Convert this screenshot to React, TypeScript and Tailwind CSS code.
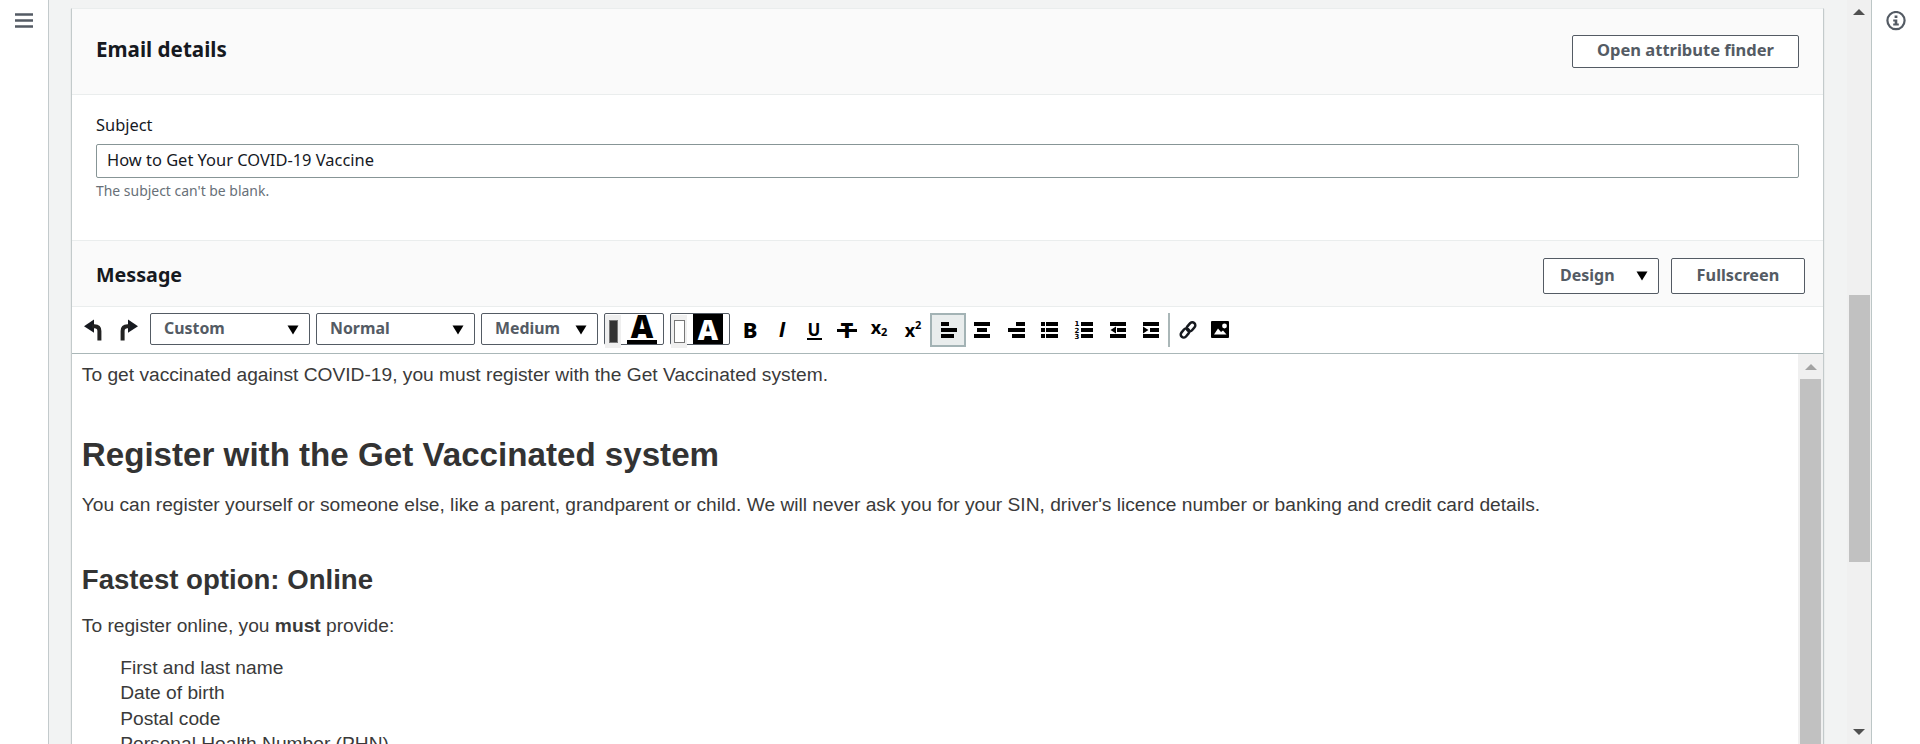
import React from "react";

const ui = "font-['Noto_Sans','Open_Sans',sans-serif]";

function Caret({ className = "" }: { className?: string }) {
  return (
    <svg width="12" height="10" viewBox="0 0 12 10" className={className}>
      <path d="M0.5 0.5H11.5L6 9.5Z" fill="#000" />
    </svg>
  );
}

function Select({ label, className }: { label: string; className: string }) {
  return (
    <button
      className={`-mt-0.5 flex h-8 shrink-0 items-center justify-between rounded-[2px] border border-[#545b64] bg-white pl-[13px] pr-[10px] text-left font-bold text-[#545b64] ${className}`}
    >
      <span className="-mt-0.5 leading-6">{label}</span>
      <Caret className="mt-0.5" />
    </button>
  );
}

function Bars({ rows }: { rows: [number, number, number][] }) {
  return (
    <svg width="18" height="18" viewBox="0 0 18 18" shapeRendering="crispEdges" className="block shrink-0">
      {rows.map(([x, y, w], i) => (
        <rect key={i} x={x} y={y} width={w} height="4" fill="#000" />
      ))}
    </svg>
  );
}

function Tool({ className = "", children }: { className?: string; children: React.ReactNode }) {
  return <button className={`flex h-[34px] shrink-0 items-center justify-center ${className}`}>{children}</button>;
}

function UndoArrow({ flip = false }: { flip?: boolean }) {
  return (
    <svg width="20" height="22" viewBox="0 0 20 22" className={flip ? "-scale-x-100" : ""}>
      <path d="M1 7.2L11 0.6V13.8Z" fill="#16191f" />
      <path d="M9 7.2H11.5Q16.4 7.2 16.4 12V21.5" fill="none" stroke="#222" strokeWidth="4" />
    </svg>
  );
}

function Toolbar() {
  return (
    <div className="flex h-[47px] shrink-0 items-center border-b border-[#aab7b8] pl-[11px] text-[15.9px] text-black">
      <Tool className="w-5"><UndoArrow /></Tool>
      <Tool className="ml-4 w-5"><UndoArrow flip /></Tool>
      <Select label="Custom" className="ml-[11px] w-[160px]" />
      <Select label="Normal" className="ml-1.5 w-[159px]" />
      <Select label="Medium" className="ml-1.5 w-[117px]" />
      <div className="-mt-0.5 ml-1.5 flex h-8 w-[60px] shrink-0 rounded-[2px] border border-[#545b64]">
        <div className="mt-px flex h-[33px] w-[16px] shrink-0 items-center justify-center bg-[#efefef]">
          <div className="h-[23px] w-[9px] border border-[#777] bg-[#333]" />
        </div>
        <div className="ml-1.5 flex h-[30px] w-[30px] flex-col items-center">
          <span className="h-[26px] text-[31px] leading-[24px] font-extrabold font-['Open_Sans',sans-serif]">A</span>
          <span className="h-1 w-full shrink-0 bg-black" />
        </div>
      </div>
      <div className="-mt-0.5 ml-1.5 flex h-8 w-[60px] shrink-0 rounded-[2px] border border-[#545b64]">
        <div className="mt-px flex h-[33px] w-[16px] shrink-0 items-center justify-center bg-[#efefef]">
          <div className="h-[23px] w-[11px] border border-[#777] bg-white" />
        </div>
        <div className="ml-1.5 flex h-[30px] w-[30px] items-center justify-center bg-black">
          <span className="text-[28px] leading-[30px] font-extrabold text-white font-['Open_Sans',sans-serif]">A</span>
        </div>
      </div>
      <Tool className="ml-1 w-8"><span className="-mt-0.5 text-[22px] leading-6 font-extrabold">B</span></Tool>
      <Tool className="w-8"><span className="text-[22px] leading-6 font-bold italic font-['Liberation_Sans',sans-serif]">I</span></Tool>
      <Tool className="w-8">
        <span className="mt-px h-[18px] w-[15px] border-b-2 border-black text-center text-[17px] leading-[15px] font-bold">U</span>
      </Tool>
      <Tool className="relative w-[34px]">
        <span className="-mt-0.5 text-[22px] leading-6 font-extrabold">T</span>
        <span className="absolute top-[16px] left-[7px] h-[3px] w-5 bg-black" />
      </Tool>
      <Tool className="-ml-px w-8">
        <span className="-mt-1.5 flex items-end leading-5 font-bold"><span className="text-[18px]">x</span><span className="-mb-px text-[11px] leading-3">2</span></span>
      </Tool>
      <Tool className="w-9">
        <span className="flex items-start leading-5 font-bold"><span className="text-[18px]">x</span><span className="-mt-px text-[11px] leading-3">2</span></span>
      </Tool>
      <Tool className="-ml-px w-9 border-2 border-[#a3b3b5] bg-[#e9eded]">
        <Bars rows={[[2, 1, 8], [2, 7, 16], [2, 13, 13]]} />
      </Tool>
      <Tool className="w-[34px]"><Bars rows={[[0, 1, 16], [3, 7, 10], [0, 13, 16]]} /></Tool>
      <Tool className="w-[34px]"><Bars rows={[[8, 1, 9], [0, 7, 17], [4, 13, 13]]} /></Tool>
      <Tool className="w-8"><Bars rows={[[0, 1, 4], [5, 1, 12], [0, 7, 4], [5, 7, 12], [0, 13, 4], [5, 13, 12]]} /></Tool>
      <Tool className="w-9 pl-1">
        <span className="mt-0.5 flex w-[7px] shrink-0 flex-col font-['DejaVu_Sans',sans-serif] text-[7px] leading-[6.5px] font-bold"><span>1</span><span>2</span><span>3</span></span>
        <Bars rows={[[0, 1, 12], [0, 7, 12], [0, 13, 12]]} />
      </Tool>
      <Tool className="w-[33px]">
        <svg width="18" height="18" viewBox="1 0 18 18">
          <path d="M1 1H17V5H1ZM8 7H17V11H8ZM1 13H17V17H1ZM1.5 9L7 5.5V12.5Z" />
        </svg>
      </Tool>
      <Tool className="w-[33px]">
        <svg width="18" height="18" viewBox="1 0 18 18">
          <path d="M1 1H17V5H1ZM8 7H17V11H8ZM1 13H17V17H1ZM6.5 9L1 5.5V12.5Z" />
        </svg>
      </Tool>
      <span className="h-[34px] w-0.5 bg-[#aab7b8]" />
      <Tool className="ml-2 w-5">
        <svg width="18" height="18" viewBox="0 0 18 18" fill="none" stroke="#16191f" strokeWidth="2.5">
          <rect x="-5" y="-3" width="10" height="6" rx="3" transform="translate(12 5.8) rotate(-50)" />
          <rect x="-5" y="-3" width="10" height="6" rx="3" transform="translate(6 12) rotate(-50)" />
        </svg>
      </Tool>
      <Tool className="ml-3 w-5">
        <svg width="18" height="17" viewBox="0 0 18 17" className="-mt-0.5">
          <rect width="18" height="17" rx="1" fill="#000" />
          <circle cx="13.5" cy="5" r="2.4" fill="#fff" />
          <path d="M3 13.5L7 7.5L10 11L12 9.5L15.5 13.5Z" fill="#fff" />
        </svg>
      </Tool>
    </div>
  );
}

function Triangle({ down = false, color }: { down?: boolean; color: string }) {
  return (
    <svg width="12" height="6" viewBox="0 0 12 6" className={down ? "rotate-180" : ""}>
      <path d="M0 6L6 0L12 6Z" fill={color} />
    </svg>
  );
}

function MessageBody() {
  return (
    <div className="flex min-h-0 flex-1 overflow-hidden">
      <div className="min-w-0 flex-1 overflow-hidden pt-2 pl-[9.8px] font-['Liberation_Sans',Arial,sans-serif] text-[19.2px] leading-[25.6px] whitespace-nowrap text-[#3a3a3a]">
        <p>To get vaccinated against COVID-19, you must register with the Get Vaccinated system.</p>
        <h1 className="mt-[47.8px] text-[33.15px] leading-10 font-bold text-[#333]">Register with the Get Vaccinated system</h1>
        <p className="mt-[17px]">
          You can register yourself or someone else, like a parent, grandparent or child. We will never ask you for your
          SIN, driver's licence number or banking and credit card details.
        </p>
        <h2 className="mt-[45.3px] text-[27.6px] leading-[34px] font-bold text-[#333]">Fastest option: Online</h2>
        <p className="mt-4">
          To register online, you <b>must</b> provide:
        </p>
        <ul className="mt-[15.8px] pl-[38.4px]">
          <li>First and last name</li>
          <li>Date of birth</li>
          <li>Postal code</li>
          <li>Personal Health Number (PHN)</li>
        </ul>
      </div>
      <div className="flex w-[25px] shrink-0 flex-col items-center bg-[#f0f0f0] pt-[10px]">
        <Triangle color="#a3a3a3" />
        <div className="mt-[9px] w-[21px] flex-1 bg-[#c1c1c1]" />
      </div>
    </div>
  );
}

export default function App() {
  return (
    <div className={`flex h-[744px] w-full overflow-hidden bg-[#f2f3f3] text-[#16191f] ${ui}`}>
      <nav className="w-[49px] shrink-0 border-r border-[#c3cacc] bg-white pt-[13px] pl-[15px]">
        <svg width="18" height="15" viewBox="0 0 18 15" fill="#545b64">
          <path d="M0 0.2H18V2.8H0ZM0 6.2H18V8.8H0ZM0 12.2H18V14.8H0Z" />
        </svg>
      </nav>

      <main className="flex min-w-0 flex-1 pt-2 pl-[22px]">
        <div className="flex min-w-0 flex-1 flex-col border-x border-t border-x-[#c3cacb] border-t-[#eaeded] bg-white shadow-[0_1px_1px_rgba(0,28,36,0.2)]">
          <header className="flex h-[86px] shrink-0 items-center justify-between border-b border-[#eaeded] bg-[#fafafa] pr-6 pl-6">
            <h2 className="-mt-[5px] text-[20.6px] leading-7 font-bold">Email details</h2>
            <button className="flex h-[33px] w-[227px] items-center justify-center rounded-[2px] border border-[#545b64] bg-white text-[16.5px] font-bold text-[#545b64]">
              <span className="-mt-[3px] leading-6">Open attribute finder</span>
            </button>
          </header>

          <section className="flex h-[145px] shrink-0 flex-col pr-6 pl-6">
            <label className="mt-[18px] text-[16.4px] leading-6">Subject</label>
            <div className="mt-[7px] flex h-[34px] items-center rounded-[2px] border border-[#879596] bg-white pl-[10px] text-[16.45px] leading-6">
              <span className="-mt-0.5">How to Get Your COVID-19 Vaccine</span>
            </div>
            <p className="mt-px text-[13.95px] leading-6 text-[#687078]">The subject can't be blank.</p>
          </section>

          <header className="flex h-[67px] shrink-0 items-center border-y border-[#eaeded] bg-[#fafafa] pt-1 pr-[18px] pl-6">
            <h2 className="-mt-px flex-1 text-[19.7px] leading-7 font-bold">Message</h2>
            <button className="flex h-9 w-[116px] items-center justify-between rounded-[2px] border border-[#545b64] bg-white pr-[10px] pl-4 text-[16px] font-bold text-[#545b64]">
              <span className="-mt-0.5 leading-6">Design</span>
              <Caret />
            </button>
            <button className="ml-3 flex h-9 w-[134px] items-center justify-center rounded-[2px] border border-[#545b64] bg-white text-[16.3px] font-bold text-[#545b64]">
              <span className="-mt-0.5 leading-6">Fullscreen</span>
            </button>
          </header>

          <Toolbar />
          <MessageBody />
        </div>
      </main>

      <div className="ml-[23px] flex w-6 shrink-0 flex-col items-center bg-[#f0f0f0] pt-[9px] pb-[9px]">
        <Triangle color="#505050" />
        <div className="mt-[280px] h-[267px] w-[21px] bg-[#c1c1c1]" />
        <div className="flex-1" />
        <Triangle color="#505050" down />
      </div>

      <aside className="w-[49px] shrink-0 border-l border-[#bcc6c6] bg-white pt-[11px] pl-[14px]">
        <svg width="20" height="20" viewBox="0 0 20 20">
          <circle cx="10" cy="9.6" r="8.6" fill="none" stroke="#545b64" strokeWidth="2.2" />
          <path d="M8.6 4.4H11.4V7H8.6ZM7.2 8.4H11.3V12.6H12.8V14.6H7.2V12.6H8.7V10.4H7.2Z" fill="#545b64" />
        </svg>
      </aside>
    </div>
  );
}
